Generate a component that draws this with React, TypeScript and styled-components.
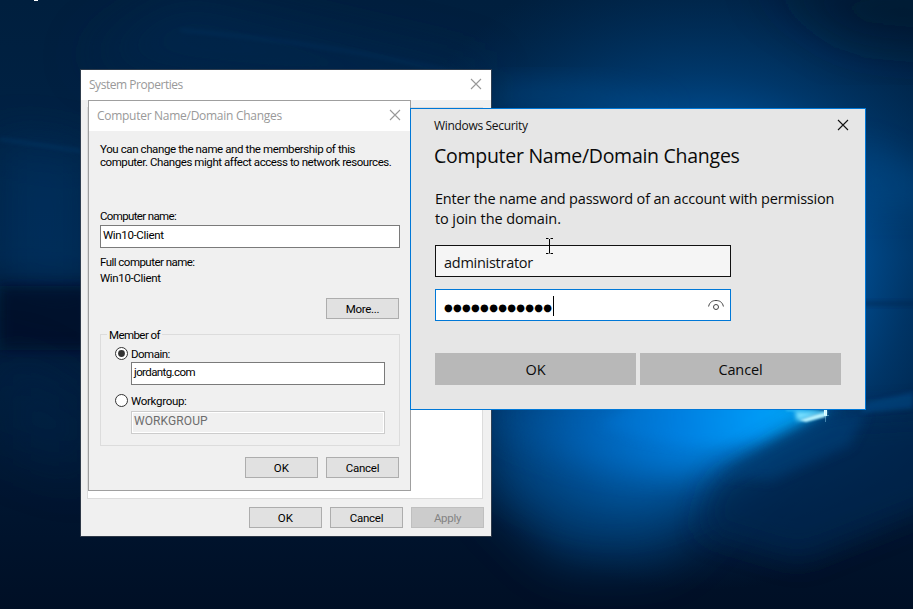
import React from 'react';
import styled, { createGlobalStyle, css } from 'styled-components';

const GlobalStyle = createGlobalStyle`
  *, *::before, *::after { box-sizing: border-box; }
  html, body { margin: 0; padding: 0; overflow: hidden; }
`;

const uiFont = '"Open Sans", "Noto Sans", sans-serif';
const classicFont = 'Roboto, "Liberation Sans", sans-serif';

const Desktop = styled.main`
  position: relative;
  width: 913px;
  height: 609px;
  overflow: hidden;
  background: #00152e;
  font-family: ${classicFont};
  font-size: 11.5px;
  line-height: 13px;
  color: #000;
`;

const WallpaperArt = styled.svg`
  position: absolute;
  inset: 0;
  display: block;
`;

const Win = styled.section<{ $x: number; $y: number; $w: number; $h: number }>`
  position: absolute;
  left: ${p => p.$x}px;
  top: ${p => p.$y}px;
  width: ${p => p.$w}px;
  height: ${p => p.$h}px;
  display: flex;
  flex-direction: column;
`;

const ClassicWindow = styled(Win)`
  background: #f0f0f0;
`;

const PropertiesWindow = styled(ClassicWindow)`
  box-shadow: 0 0 0 1px rgba(62, 70, 80, 0.75);
`;

const NameWindow = styled(ClassicWindow)`
  border: 1px solid #9f9f9f;
`;

const SecurityWindow = styled(Win)`
  background: #e6e6e6;
  border: 1px solid #0078d7;
  font-family: ${uiFont};
  color: #0a0a0a;
`;

const TitleBar = styled.header`
  flex: none;
  height: 30px;
  padding: 0 9px 0 8px;
  display: flex;
  justify-content: space-between;
  align-items: flex-start;
  background: #fff;
  color: #999;
  font-family: ${uiFont};
  font-size: 12px;
  line-height: 30px;
`;

const SecurityTitleBar = styled(TitleBar)`
  height: 32px;
  padding: 0 16px 0 23px;
  line-height: 33px;
  background: transparent;
  color: #111;
`;

const Text = styled.span<{ $track?: number }>`
  display: block;
  white-space: nowrap;
  letter-spacing: ${p => p.$track ?? 0}px;
`;

const CloseIcon = styled.svg<{ $top: number }>`
  display: block;
  flex: none;
  margin-top: ${p => p.$top}px;
`;

const TabPane = styled.div`
  flex: none;
  width: 396px;
  height: 392px;
  margin: 7px 0 0 6px;
  background: #fff;
  border: 1px solid #dcdcdc;
`;

const ButtonRow = styled.div<{ $top: number; $right: number }>`
  display: flex;
  justify-content: flex-end;
  gap: 8px;
  margin-top: ${p => p.$top}px;
  padding-right: ${p => p.$right}px;
`;

const ClassicButton = styled.button`
  width: 73px;
  height: 21px;
  padding: 1px 0 0;
  display: flex;
  align-items: center;
  justify-content: center;
  border: 1px solid #adadad;
  border-radius: 0;
  background: #e1e1e1;
  color: #000;
  font: inherit;
  &:disabled {
    background: #ccc;
    border-color: #bfbfbf;
    color: #838383;
  }
`;

const NameBody = styled.div`
  display: flex;
  flex-direction: column;
  padding: 12px 10px 0 11px;
`;

const Intro = styled.p`
  margin: 0 0 41px;
`;

const FieldBox = styled.div<{ $disabled?: boolean }>`
  height: 23px;
  padding: 3px 2px 0;
  border: 1px solid #7a7a7a;
  background: #fff;
  ${p => p.$disabled && css`
    border-color: #ccc;
    box-shadow: inset 0 0 0 1px #fff;
    background: #f0f0f0;
    color: #6d6d6d;
    font-size: 12px;
  `}
`;

const NameField = styled(FieldBox)`
  margin: 2px 0 8px;
`;

const FullName = styled.div`
  display: flex;
  flex-direction: column;
  gap: 3px;
`;

const Group = styled.fieldset`
  height: 112px;
  margin: 15px 0 0;
  padding: 0 14px;
  border: 1px solid #dcdcdc;
  min-width: 0;
`;

const Legend = styled.div`
  width: 55px;
  margin: -6px 0 0 -8px;
  padding-left: 2px;
  background: #f0f0f0;
`;

const RadioRow = styled.div<{ $top: number }>`
  display: flex;
  gap: 3px;
  height: 13px;
  margin-top: ${p => p.$top}px;
  line-height: 15px;
`;

const RadioMark = styled.svg`
  display: block;
  flex: none;
`;

const RadioField = styled(FieldBox)<{ $top: number }>`
  margin: ${p => p.$top}px 0 0 16px;
`;

const SecurityBody = styled.div`
  display: flex;
  flex-direction: column;
  padding: 0 24px;
  font-size: 14.5px;
  line-height: 20px;
`;

const Heading = styled.h1`
  margin: 1px 0 0 -1px;
  font-size: 19.5px;
  font-weight: 400;
  line-height: 28px;
`;

const Message = styled.p`
  margin: 19px 0 16px;
`;

const Credential = styled.div<{ $focused?: boolean }>`
  width: 296px;
  height: 32px;
  margin-bottom: 12px;
  padding: 4px 6px 0 8px;
  display: flex;
  align-items: center;
  border: 1px solid ${p => (p.$focused ? '#0078d7' : '#111')};
  background: ${p => (p.$focused ? '#fff' : '#f5f5f5')};
  color: #111;
`;

const Dots = styled.span`
  width: 109px;
  height: 20px;
  font-family: "DejaVu Sans", sans-serif;
  font-size: 10px;
  line-height: 22px;
  letter-spacing: 1.3px;
  color: #000;
  white-space: nowrap;
`;

const PasswordDots = styled(Dots)`
  letter-spacing: 0.3px;
`;

const Caret = styled.i`
  width: 1px;
  height: 20px;
  margin: -2px 0 0 0;
  background: #000;
`;

const EyeIcon = styled.svg`
  display: block;
  margin: -5px 0 0 auto;
`;

const Actions = styled.div`
  display: grid;
  grid-template-columns: 201px 201px;
  gap: 4px;
  margin-top: 20px;
`;

const FlatButton = styled.button`
  height: 32px;
  padding: 1px 0 0;
  display: flex;
  align-items: center;
  justify-content: center;
  border: 0;
  background: #b8b8b8;
  color: #0a0a0a;
  font: inherit;
`;

const Pointer = styled.svg`
  position: absolute;
  left: 545px;
  top: 238px;
`;

const CornerMark = styled.i`
  position: absolute;
  left: 34px;
  top: 0;
  width: 4px;
  height: 1px;
  background: #fff;
`;

function Wallpaper() {
  return (
    <WallpaperArt width="913" height="609" viewBox="0 0 913 609" aria-hidden="true">
      <defs>
        <linearGradient id="base" x1="0" y1="0" x2="0" y2="1">
          <stop offset="0" stopColor="#001f3e" />
          <stop offset=".42" stopColor="#002449" />
          <stop offset=".5" stopColor="#001a38" />
          <stop offset=".62" stopColor="#001c3c" />
          <stop offset="1" stopColor="#000f25" />
        </linearGradient>
        <radialGradient id="halo" gradientUnits="userSpaceOnUse" cx="0" cy="0" r="1" gradientTransform="translate(700 270) scale(340 320)">
          <stop offset="0" stopColor="#006fc8" />
          <stop offset=".4" stopColor="#005aa8" stopOpacity=".9" />
          <stop offset=".62" stopColor="#004684" stopOpacity=".6" />
          <stop offset="1" stopColor="#003566" stopOpacity="0" />
        </radialGradient>
        <radialGradient id="beam" gradientUnits="userSpaceOnUse" cx="826" cy="408" r="370">
          <stop offset="0" stopColor="#08b4ff" />
          <stop offset=".2" stopColor="#009cfa" />
          <stop offset=".4" stopColor="#0082e4" />
          <stop offset=".65" stopColor="#0069c2" stopOpacity=".85" />
          <stop offset=".85" stopColor="#00529a" stopOpacity=".5" />
          <stop offset="1" stopColor="#004786" stopOpacity="0" />
        </radialGradient>
        <filter id="b2" x="-50%" y="-50%" width="200%" height="200%"><feGaussianBlur stdDeviation="2" /></filter>
        <filter id="b6" x="-50%" y="-50%" width="200%" height="200%"><feGaussianBlur stdDeviation="6" /></filter>
        <filter id="b14" x="-50%" y="-50%" width="200%" height="200%"><feGaussianBlur stdDeviation="14" /></filter>
        <filter id="b25" x="-50%" y="-50%" width="200%" height="200%"><feGaussianBlur stdDeviation="25" /></filter>
        <filter id="spark" x="-50%" y="-50%" width="200%" height="200%"><feGaussianBlur stdDeviation="1" /></filter>
      </defs>
      <rect width="913" height="609" fill="url(#base)" />
      <path d="M0 140 L90 155 L90 300 L0 280Z" fill="#003a70" opacity=".45" filter="url(#b25)" />
      <path d="M0 286H90V350H0Z" fill="#001028" opacity=".7" filter="url(#b6)" />
      <path d="M0 350 L90 400 L90 480 L0 450Z" fill="#00254c" opacity=".45" filter="url(#b25)" />
      <path d="M180 0 L480 70 L480 110 L80 60Z" fill="#002b54" opacity=".5" filter="url(#b25)" />
      <rect width="913" height="609" fill="url(#halo)" />
      <path d="M760 -20 H960 V50 L850 40Z" fill="#00142c" opacity=".6" filter="url(#b25)" />
      <path d="M856 140 L930 170 V210 H856Z" fill="#004f90" opacity=".35" filter="url(#b14)" />
      <path d="M860 301H930V306H860Z" fill="#00234a" opacity=".45" filter="url(#b2)" />
      <path d="M500 400 H820 L720 500 L660 560 L560 560 L490 490Z" fill="#005297" opacity=".55" filter="url(#b25)" />
      <path d="M826 411 L760 400 H480 V460 Q550 510 640 505 L740 460Z" fill="url(#beam)" opacity=".6" filter="url(#b25)" />
      <path d="M827 411 L780 390 H480 V425 Q570 470 680 472 L765 443Z" fill="url(#beam)" opacity=".7" filter="url(#b14)" />
      <path d="M827 411 L740 396 L640 400 L600 425 Q680 455 765 438Z" fill="url(#beam)" opacity=".75" filter="url(#b6)" />
      <path d="M829 419 L780 444 L715 482 L700 530 L800 560 L950 500 V412Z" fill="#00274f" opacity=".7" filter="url(#b14)" />
      <path d="M829 418 L780 442 L722 474 L770 480 L850 445 L866 412Z" fill="#003c75" opacity=".7" filter="url(#b6)" />
      <path d="M868 402 L913 392 V408 L860 413Z" fill="#004d8d" opacity=".5" filter="url(#b2)" />
      <path d="M827 412 L795 411 L797 421Z" fill="#76dfff" filter="url(#b2)" />
      <path d="M827 411 L799 420 L806 422 L825 417Z" fill="#b5f2ff" filter="url(#spark)" />
      <path d="M786 410 L825 413" stroke="#4ed2ff" strokeWidth="1" filter="url(#spark)" />
      <path d="M824 409h3v7h-3Z" fill="#dffcff" />
      <path d="M820 415.500 H829 M825.500 410 V422" stroke="#a6edff" strokeWidth="1" opacity=".4" />
      <path d="M500 82 Q600 76 680 108 H500Z" fill="#005ba5" opacity=".3" filter="url(#b14)" />
      <path d="M180 30 Q340 44 480 78" stroke="#004a85" strokeWidth="3" opacity=".2" fill="none" filter="url(#b2)" />
      <path d="M0 139 L81 151" stroke="#00508e" strokeWidth="2" opacity=".4" filter="url(#b2)" />
    </WallpaperArt>
  );
}

function Close({ color, top }: { color: string; top: number }) {
  return (
    <CloseIcon $top={top} width="12" height="12" viewBox="0 0 12 12" fill="none">
      <path d="M1 1 L11 11 M11 1 L1 11" stroke={color} strokeWidth="1.1" />
    </CloseIcon>
  );
}

function Radio({ checked }: { checked?: boolean }) {
  return (
    <RadioMark width="13" height="13" viewBox="0 0 13 13">
      <circle cx="6.5" cy="6.5" r="6" fill="#fff" stroke="#333" />
      {checked && <circle cx="6.5" cy="6.5" r="3.4" fill="#333" />}
    </RadioMark>
  );
}

function SystemProperties() {
  return (
    <PropertiesWindow $x={81} $y={70} $w={410} $h={466}>
      <TitleBar>
        <Text $track={-0.46}>System Properties</Text>
        <Close color="#999" top={8} />
      </TitleBar>
      <TabPane />
      <ButtonRow $top={8} $right={7}>
        <ClassicButton><Text $track={0.2}>OK</Text></ClassicButton>
        <ClassicButton><Text $track={-0.25}>Cancel</Text></ClassicButton>
        <ClassicButton disabled><Text $track={-0.3}>Apply</Text></ClassicButton>
      </ButtonRow>
    </PropertiesWindow>
  );
}

function NameChanges() {
  return (
    <NameWindow $x={88} $y={100} $w={323} $h={391}>
      <TitleBar>
        <Text $track={-0.28}>Computer Name/Domain Changes</Text>
        <Close color="#999" top={8} />
      </TitleBar>
      <NameBody>
        <Intro>
          <Text $track={-0.4}>You can change the name and the membership of this</Text>
          <Text $track={-0.435}>computer. Changes might affect access to network resources.</Text>
        </Intro>
        <Text $track={-0.65}>Computer name:</Text>
        <NameField><Text $track={-0.35}>Win10-Client</Text></NameField>
        <FullName>
          <Text $track={-0.53}>Full computer name:</Text>
          <Text $track={-0.35}>Win10-Client</Text>
        </FullName>
        <ButtonRow $top={13} $right={1}>
          <ClassicButton><Text $track={-0.3}>More...</Text></ClassicButton>
        </ButtonRow>
        <Group>
          <Legend><Text $track={-0.58}>Member of</Text></Legend>
          <RadioRow $top={5}><Radio checked /><Text $track={-0.5}>Domain:</Text></RadioRow>
          <RadioField $top={2}><Text $track={-0.6}>jordantg.com</Text></RadioField>
          <RadioRow $top={9}><Radio /><Text $track={-0.3}>Workgroup:</Text></RadioRow>
          <RadioField $top={4} $disabled><Text $track={0.1}>WORKGROUP</Text></RadioField>
        </Group>
        <ButtonRow $top={11} $right={1}>
          <ClassicButton><Text $track={0.2}>OK</Text></ClassicButton>
          <ClassicButton><Text $track={-0.25}>Cancel</Text></ClassicButton>
        </ButtonRow>
      </NameBody>
    </NameWindow>
  );
}

function WindowsSecurity() {
  return (
    <SecurityWindow $x={410} $y={108} $w={456} $h={302}>
      <SecurityTitleBar>
        <Text $track={-0.32}>Windows Security</Text>
        <Close color="#111" top={10} />
      </SecurityTitleBar>
      <SecurityBody>
        <Heading><Text $track={-0.27}>Computer Name/Domain Changes</Text></Heading>
        <Message>
          <Text $track={-0.195}>Enter the name and password of an account with permission</Text>
          <Text $track={-0.1}>to join the domain.</Text>
        </Message>
        <Credential><Text $track={-0.27}>administrator</Text></Credential>
        <Credential $focused>
          <PasswordDots>●●●●●●●●●●●●</PasswordDots>
          <Caret />
          <EyeIcon width="16" height="12" viewBox="0 0 16 12" fill="none" stroke="#444" strokeWidth="1">
            <path d="M.6 7.500 C1.500 3 4.600 1.500 8 1.500 S14.500 3 15.400 7.500" />
            <circle cx="8" cy="8" r="2.500" />
          </EyeIcon>
        </Credential>
        <Actions>
          <FlatButton><Text $track={-0.2}>OK</Text></FlatButton>
          <FlatButton><Text $track={-0.1}>Cancel</Text></FlatButton>
        </Actions>
      </SecurityBody>
    </SecurityWindow>
  );
}

export default function App() {
  return (
    <>
      <GlobalStyle />
      <Desktop>
        <Wallpaper />
        <CornerMark />
        <SystemProperties />
        <NameChanges />
        <WindowsSecurity />
        <Pointer width="9" height="17" viewBox="0 0 9 17" fill="none" stroke="#000">
          <path d="M1 .5 H3.500 M5.500 .5 H8 M4.500 1 V15.500 M1 15.500 H3.500 M5.500 15.500 H8" />
        </Pointer>
      </Desktop>
    </>
  );
}
